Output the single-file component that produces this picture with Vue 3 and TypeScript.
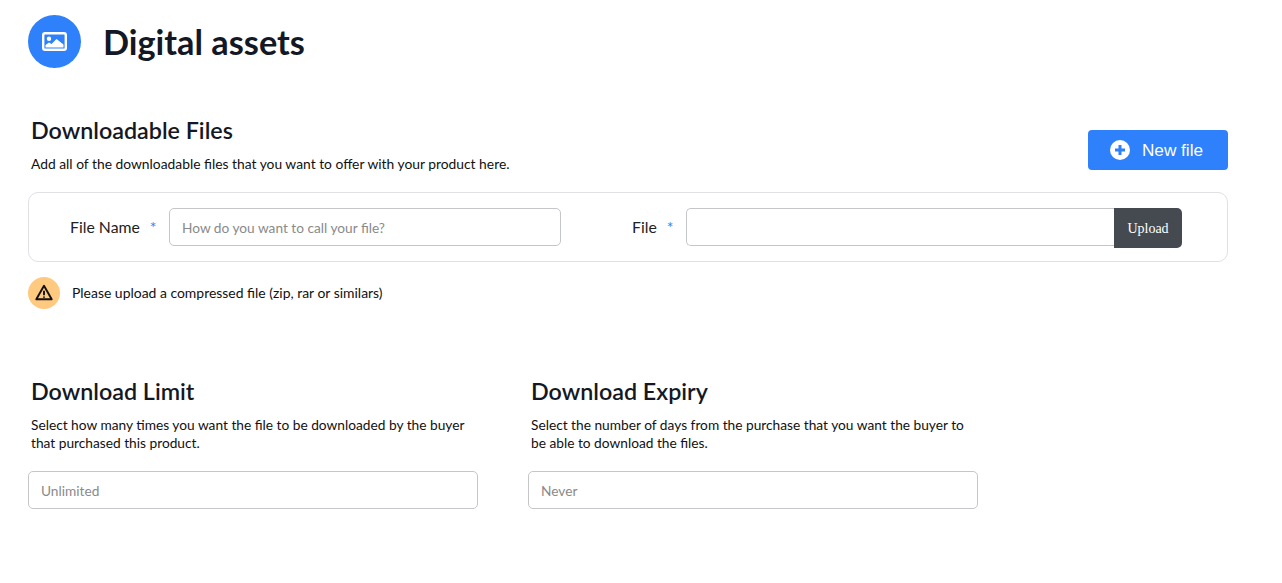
<script setup lang="ts">
const title = 'Digital assets'
</script>
<template>
<div class="page">
  <header class="head">
    <span class="badge">
      <svg width="25" height="19" viewBox="0 0 25 19"><rect x="1.200" y="1.200" width="22.600" height="16.600" rx="1.800" fill="#2f80fb" stroke="#fff" stroke-width="2.400"/><circle cx="7" cy="6.800" r="2.200" fill="#fff"/><path d="M3.500 15.500v-2.500l3.500-2.500 2.500 1.500 5-5 7 5.500v3z" fill="#fff"/></svg>
    </span>
    <h1>{{ title }}</h1>
  </header>

  <section class="files">
    <div class="files-top">
      <div>
        <h2>Downloadable Files</h2>
        <p>Add all of the downloadable files that you want to offer with your product here.</p>
      </div>
      <button class="new" type="button">
        <svg width="20" height="20" viewBox="0 0 20 20"><circle cx="10" cy="10" r="10" fill="#fff"/><path d="M10 5v10M5 10h10" stroke="#2f80fb" stroke-width="3"/></svg>
        New file
      </button>
    </div>
    <div class="card">
      <label class="lab lab1">File Name <i>*</i></label>
      <input class="inp name" placeholder="How do you want to call your file?" />
      <label class="lab lab2">File <i>*</i></label>
      <div class="upl">
        <div class="inp filebox"></div>
        <button type="button">Upload</button>
      </div>
    </div>
    <div class="warn">
      <span class="warn-ic">
        <svg width="20" height="20" viewBox="0 0 20 20" fill="none" stroke="#111" stroke-width="1.900" stroke-linejoin="round"><path d="M10 2.800 2.300 16.300h15.400z"/><path d="M10 7.800v4.500M10 13.500v1.300"/></svg>
      </span>
      <span class="warn-text">Please upload a compressed file (zip, rar or similars)</span>
    </div>
  </section>

  <section class="limits">
    <div class="col">
      <h2>Download Limit</h2>
      <p>Select how many times you want the file to be downloaded by the buyer that purchased this product.</p>
      <input class="inp" placeholder="Unlimited" />
    </div>
    <div class="col">
      <h2>Download Expiry</h2>
      <p>Select the number of days from the purchase that you want the buyer to be able to download the files.</p>
      <input class="inp" placeholder="Never" />
    </div>
  </section>
</div>
</template>
<style scoped>
.page{width:1282px;height:583px;overflow:hidden;box-sizing:border-box;padding:15px 54px 0 28px;font-family:"Lato","Liberation Sans",sans-serif;color:#111;background:#fff}
.head{display:flex;align-items:center;gap:22px}
.badge{width:53px;height:53px;border-radius:50%;background:#2f80fb;display:flex;align-items:center;justify-content:center}
h1{margin:0;font-size:34.300px;font-weight:700;line-height:53px;height:53px;color:#141824}
h2{margin:0;font-size:23.300px;font-weight:600;line-height:29px;color:#141824}
p{margin:0;font-size:13.830px;line-height:18px;color:#111}
.files{margin-top:48px}
.files-top{display:flex;justify-content:space-between;align-items:flex-start;padding-left:3px}
.files-top p{margin-top:10px}
.new{margin-top:14px;width:140px;height:40px;padding:0 3px 0 0;border:0;border-radius:4px;background:#2f80fb;color:#fff;font-family:"Liberation Sans",sans-serif;font-size:17.200px;display:flex;align-items:center;justify-content:center;gap:12px}
.card{margin-top:19px;height:70px;box-sizing:border-box;border:1px solid #dfe1e5;border-radius:10px;display:flex;align-items:center}
.lab{font-size:15.800px;line-height:20px;color:#222;white-space:nowrap;padding-bottom:1px}
.lab i{font-style:normal;color:#2f80fb;margin-left:6px}
.lab1{margin-left:41px;width:99px}
.lab2{margin-left:71px;width:54px}
.inp{box-sizing:border-box;height:38px;border:1px solid #c4c6ca;border-radius:5px;padding:0 12px;font-family:inherit;font-size:13.700px;background:#fff;outline:none;display:block}
.inp::placeholder{color:#8a8a8a}
.name{width:392px}
.upl{display:flex;align-items:flex-start;margin-top:2px}
.filebox{width:428px;border-radius:5px 0 0 5px;border-right:0}
.upl button{width:68px;height:40px;padding:1px 0 0;border:0;border-radius:0 5px 5px 0;background:#454a50;color:#fff;font-family:"Liberation Serif",serif;font-size:14px}
.warn{display:flex;align-items:center;gap:12px;margin-top:15px;font-size:13.950px}
.warn-text{padding-bottom:2px}
.warn-ic{width:32px;height:32px;border-radius:50%;background:#ffc97f;display:flex;align-items:center;justify-content:center}
.limits{display:flex;gap:50px;margin-top:68px}
.col{width:450px}
.col h2,.col p{padding-left:3px}
.col p{margin-top:10px;width:440px;font-size:13.720px}
.col .inp{width:450px;margin-top:19px}
</style>
